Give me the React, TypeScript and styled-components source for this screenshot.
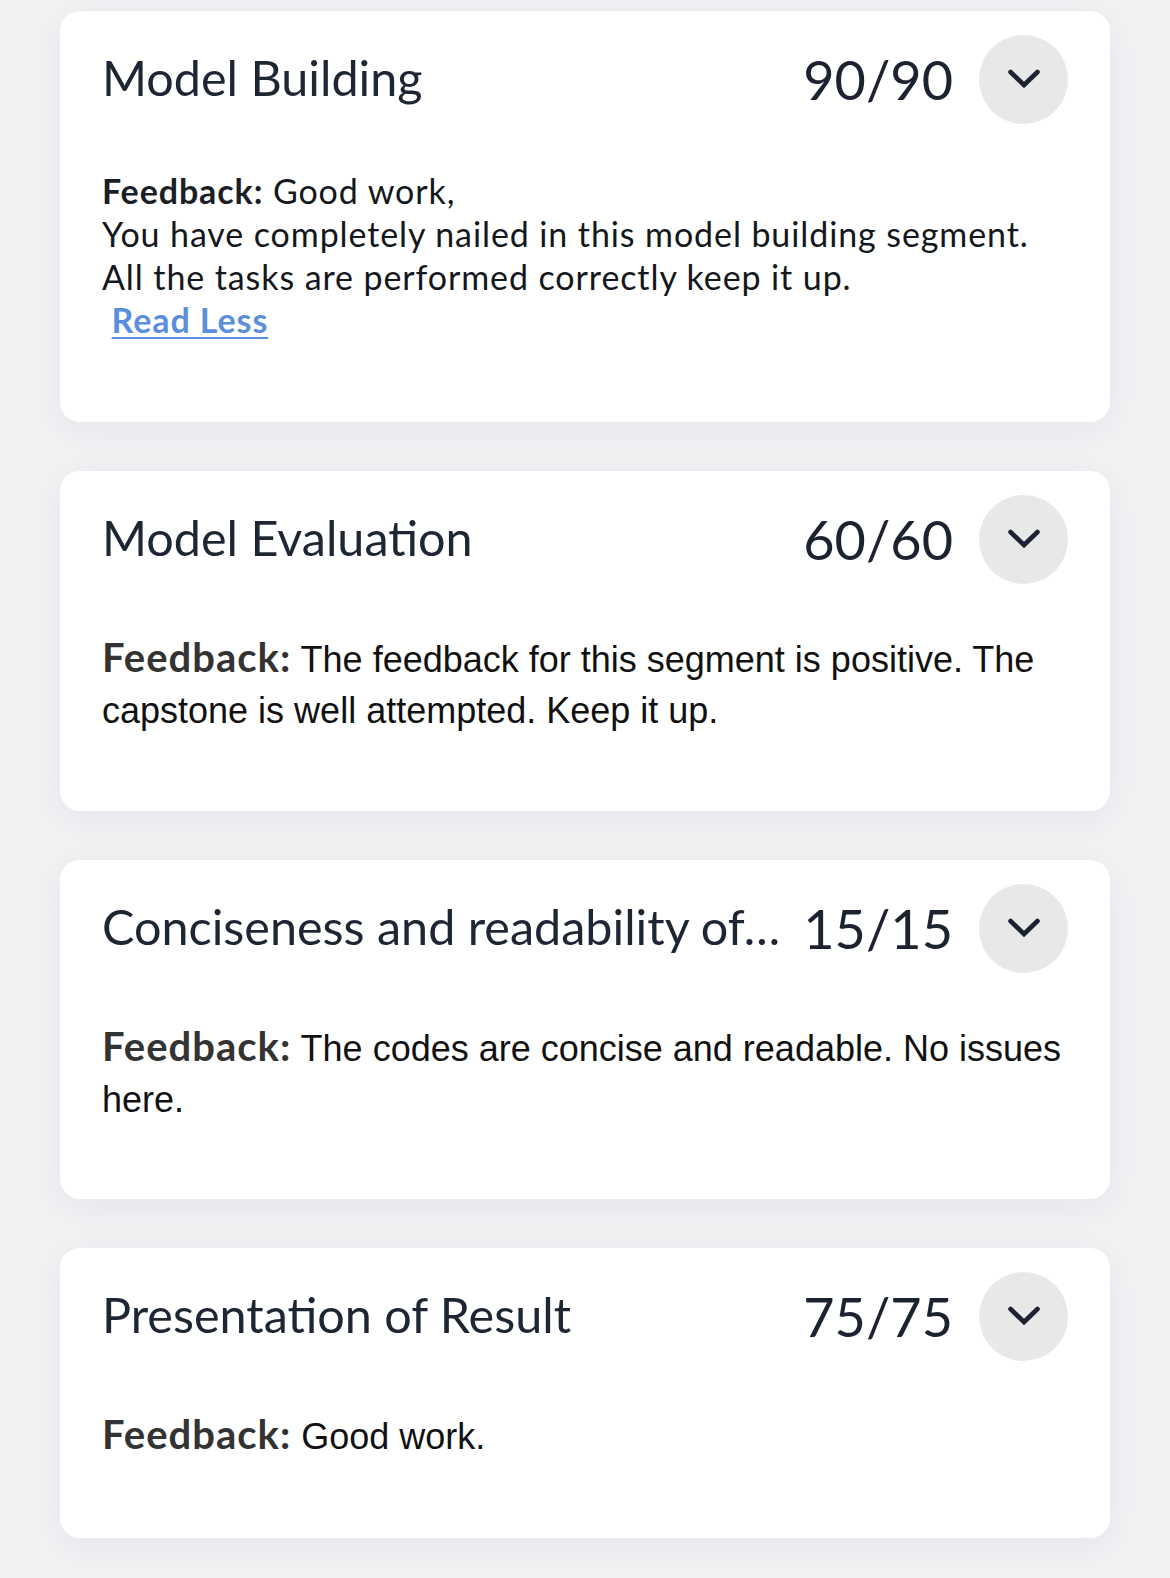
import styled, { createGlobalStyle } from "styled-components";

const GlobalStyle = createGlobalStyle`
  html, body {
    margin: 0;
    padding: 0;
    background: #f1f2f4;
  }
  body {
    font-family: "Lato", "Liberation Sans", sans-serif;
    -webkit-font-smoothing: antialiased;
  }
`;

const Page = styled.main`
  min-height: 1578px;
  box-sizing: border-box;
  padding: 11px 0 40px;
  display: flex;
  flex-direction: column;
  align-items: center;
  gap: 49px;
`;

const Card = styled.section<{ $height: number }>`
  box-sizing: border-box;
  width: 1050px;
  min-height: ${(props) => props.$height}px;
  background: #ffffff;
  border-radius: 20px;
  box-shadow: 0 8px 36px rgba(30, 40, 60, 0.06);
  padding: 24px 42px 0 42px;
`;

const Header = styled.div`
  display: flex;
  align-items: center;
  height: 88px;
`;

const Title = styled.h2`
  flex: 1;
  min-width: 0;
  margin: 0 0 4px;
  font-family: "Lato", sans-serif;
  font-weight: 400;
  font-size: 48.5px;
  color: #1e2533;
  white-space: nowrap;
  overflow: hidden;
  text-overflow: ellipsis;
`;

const Score = styled.div`
  margin: 0 26px 0 10px;
  font-family: "Lato", sans-serif;
  font-size: 54px;
  color: #1c2230;
  white-space: nowrap;
`;

const Toggle = styled.button`
  flex: none;
  width: 89px;
  height: 89px;
  border: 0;
  border-radius: 50%;
  background: #e8e8e9;
  display: flex;
  align-items: center;
  justify-content: center;
  padding: 0;
  color: #1c2230;
`;

const Body = styled.p<{ $compact: boolean }>`
  margin: ${(props) => (props.$compact ? "46px 0 0" : "49px 0 0")};
  font-family: ${(props) =>
    props.$compact ? `"Lato", sans-serif` : `"Liberation Sans", Arial, sans-serif`};
  font-size: ${(props) => (props.$compact ? "34px" : "36px")};
  letter-spacing: ${(props) => (props.$compact ? "0.9px" : "0")};
  line-height: ${(props) => (props.$compact ? "43px" : "51px")};
  color: ${(props) => (props.$compact ? "#14171c" : "#111111")};
`;

const Label = styled.b<{ $compact: boolean }>`
  font-family: "Lato", sans-serif;
  font-weight: 700;
  font-size: ${(props) => (props.$compact ? "34px" : "40px")};
  letter-spacing: ${(props) => (props.$compact ? "0.9px" : "1px")};
  color: ${(props) => (props.$compact ? "#1a1e25" : "#333333")};
`;

const ReadLess = styled.a`
  font-family: "Lato", sans-serif;
  font-weight: 700;
  color: #5b8fdc;
  text-decoration: underline;
  text-underline-offset: 4px;
  text-decoration-thickness: 2px;
`;

const Chevron = () => (
  <svg width="34" height="22" viewBox="0 0 34 22" fill="none">
    <polyline
      points="3.5,4 17,17 30.5,4"
      stroke="currentColor"
      strokeWidth="4.6"
      strokeLinecap="round"
      strokeLinejoin="miter"
    />
  </svg>
);

type SectionProps = {
  title: string;
  score: string;
  height: number;
  children: React.ReactNode;
  compact?: boolean;
};

const Section = ({ title, score, height, children, compact = false }: SectionProps) => (
  <Card $height={height}>
    <Header>
      <Title>{title}</Title>
      <Score>{score}</Score>
      <Toggle aria-label="Toggle feedback">
        <Chevron />
      </Toggle>
    </Header>
    <Body $compact={compact}>
      <Label $compact={compact}>Feedback:</Label> {children}
    </Body>
  </Card>
);

export default function App() {
  return (
    <>
      <GlobalStyle />
      <Page>
        <Section title="Model Building" score="90/90" height={411} compact>
          Good work,
          <br />
          You have completely nailed in this model building segment.
          <br />
          All the tasks are performed correctly keep it up.
          <br />
          &nbsp;<ReadLess href="#">Read Less</ReadLess>
        </Section>
        <Section title="Model Evaluation" score="60/60" height={340}>
          The feedback for this segment is positive. The capstone is well attempted. Keep it up.
        </Section>
        <Section title="Conciseness and readability of…" score="15/15" height={339}>
          The codes are concise and readable. No issues here.
        </Section>
        <Section title="Presentation of Result" score="75/75" height={290}>
          Good work.
        </Section>
      </Page>
    </>
  );
}
